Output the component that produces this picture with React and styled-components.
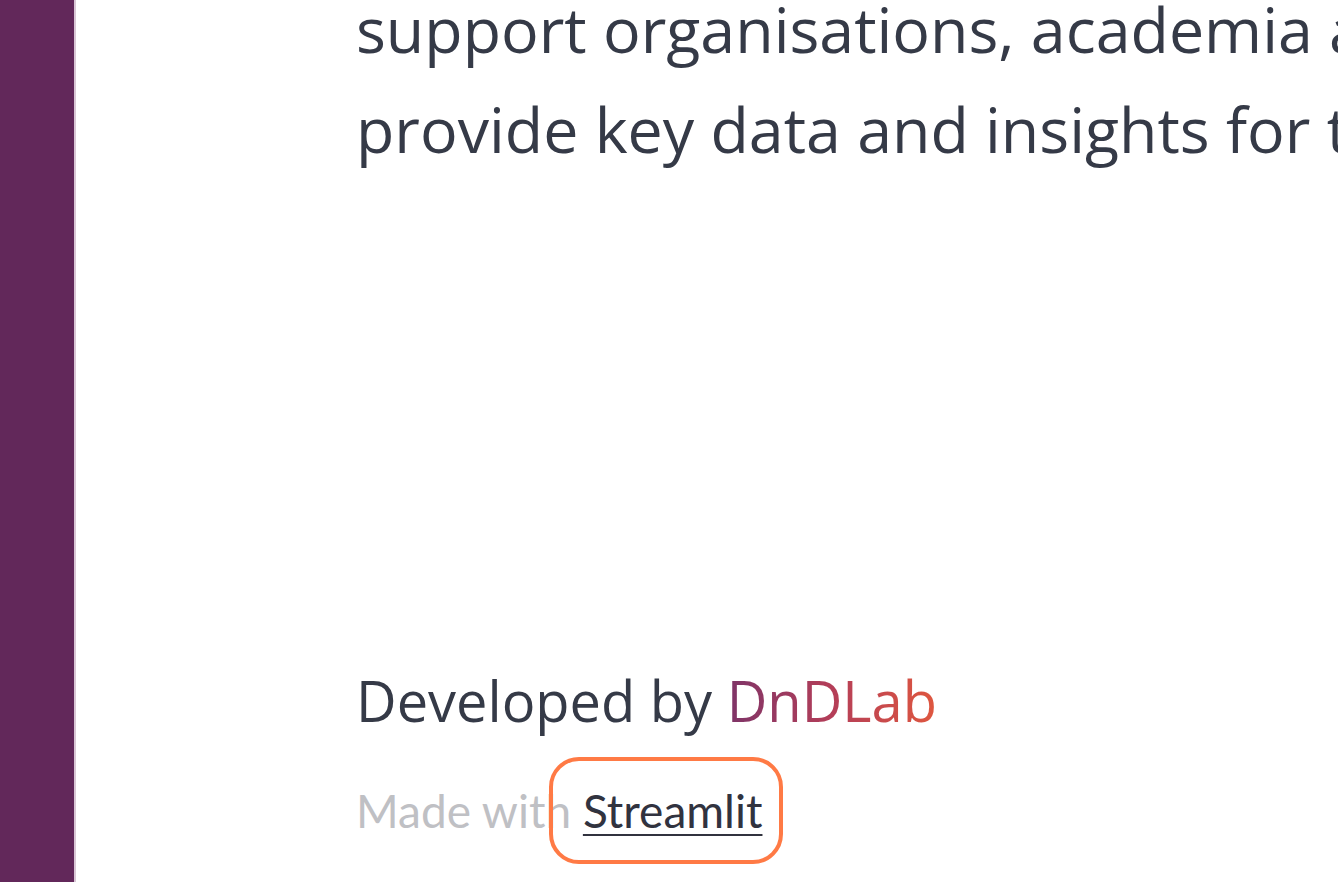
import { createGlobalStyle, styled } from 'styled-components';

const GlobalStyle = createGlobalStyle`
  html, body {
    margin: 0;
    padding: 0;
    background: #ffffff;
    overflow: hidden;
  }
  #root {
    height: 882px;
  }
`;

const Page = styled.div`
  display: flex;
  height: 882px;
  width: 1338px;
  overflow: hidden;
`;

const Sidebar = styled.aside`
  flex: 0 0 74px;
  background: #62285a;
  border-right: 2px solid #d9c6d5;
`;

const Main = styled.main`
  flex: 1;
  display: flex;
  flex-direction: column;
  padding-left: 280px;
  min-width: 0;
`;

// big intro paragraph, runs off the right edge like in the zoomed page
const Intro = styled.p`
  margin: -21px 0 0;
  font-family: 'Open Sans', sans-serif;
  font-size: 62.7px;
  line-height: 1.6;
  color: #353a47;
  white-space: nowrap;
`;

const Line = styled.span`
  display: block;
`;

const Credit = styled.p`
  margin: 476px 0 0;
  font-family: 'Open Sans', sans-serif;
  font-size: 56px;
  line-height: 1.6;
  color: #353a47;
  white-space: nowrap;
`;

const Brand = styled.span`
  background: linear-gradient(90deg, #7e3468 0%, #b43e58 50%, #df573f 100%);
  -webkit-background-clip: text;
  background-clip: text;
  color: transparent;
`;

const Footer = styled.div`
  margin-top: 38px;
  font-family: Lato, sans-serif;
  font-size: 46px;
  line-height: 1.2;
  color: #bfc0c4;
  white-space: nowrap;
`;

const FooterLink = styled.a`
  position: relative;
  color: #31333f;
  text-decoration: underline;
  text-decoration-thickness: 2px;
  text-underline-offset: 6px;

  &::after {
    content: '';
    position: absolute;
    left: -34px;
    right: -21px;
    top: -26px;
    bottom: -26px;
    border: 4px solid #ff7a45;
    border-radius: 30px;
    pointer-events: none;
  }
`;

export default function App() {
  return (
    <>
      <GlobalStyle />
      <Page>
        <Sidebar />
        <Main>
          <Intro>
            <Line>support organisations, academia and</Line>
            <Line>provide key data and insights for the</Line>
          </Intro>
          <Credit>
            Developed by <Brand>DnDLab</Brand>
          </Credit>
          <Footer>
            Made with <FooterLink href="#">Streamlit</FooterLink>
          </Footer>
        </Main>
      </Page>
    </>
  );
}
